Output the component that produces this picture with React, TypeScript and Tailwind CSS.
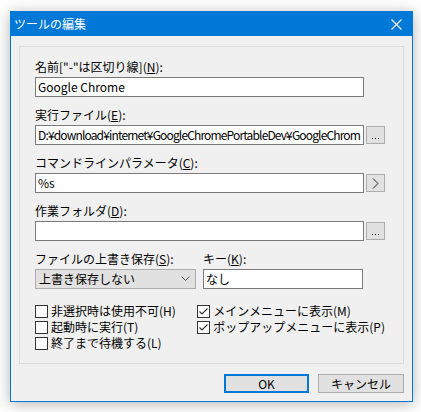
import React from 'react';

const font = { fontFamily: '"Noto Sans CJK JP", "Noto Sans", sans-serif' };

const Dots = () => (
  <div className="flex gap-[2px] mt-[7px]">
    <div className="w-[1px] h-[1px] bg-black" />
    <div className="w-[1px] h-[1px] bg-black" />
    <div className="w-[1px] h-[1px] bg-black" />
  </div>
);

const Field: React.FC<{ label: React.ReactNode; value?: string; button?: 'dots' | 'arrow'; first?: boolean; tight?: boolean }> = ({ label, value = '', button, first, tight }) => (
  <div className={first ? '' : 'mt-[10px]'}>
    <div className="h-[16px] leading-[16px] text-[12px] text-black">{label}</div>
    <div className="mt-[2px] flex">
      <div
        className={
          'w-[329px] h-[20px] border border-[#7a7a7a] bg-white px-[2px] text-[12px] leading-[18px] text-black whitespace-nowrap overflow-hidden' +
          (tight ? ' tracking-[-0.85px]' : '')
        }
      >
        {value}
      </div>
      {button && (
        <div className="ml-[2px] mt-[1px] w-[19px] h-[18px] bg-[#e1e1e1] border border-[#adadad] flex items-center justify-center">
          {button === 'dots' ? (
            <Dots />
          ) : (
            <svg width="7" height="11" viewBox="0 0 7 11">
              <path d="M1 0.5 L6 5.5 L1 10.5" fill="none" stroke="#222" strokeWidth="1" />
            </svg>
          )}
        </div>
      )}
    </div>
  </div>
);

const Check: React.FC<{ label: string; checked?: boolean }> = ({ label, checked }) => (
  <div className="h-[16px] flex items-center">
    <div className="w-[13px] h-[13px] border border-[#333] bg-white flex items-center justify-center shrink-0">
      {checked && (
        <svg width="11" height="11" viewBox="0 0 11 11">
          <path d="M1.5 5.5 L4 8 L9.5 2.5" fill="none" stroke="#333" strokeWidth="1.1" />
        </svg>
      )}
    </div>
    <span className="ml-[3px] text-[12px] leading-[16px] text-black whitespace-nowrap">{label}</span>
  </div>
);

export default function App() {
  return (
    <div className="w-[421px] h-[412px] bg-white pt-[11px] pl-[10px] overflow-hidden" style={font}>
      <div className="w-[403px] h-[391px] border border-[#0078d7] bg-[#f0f0f0] flex flex-col shadow-[0_2px_14px_rgba(0,0,0,0.3)]">
        {/* title bar */}
        <div className="h-[24px] bg-[#0078d7] flex items-center justify-between pl-[3px] pr-[10px] shrink-0">
          <span className="text-white text-[12px] leading-none">ツールの編集</span>
          <svg width="11" height="11" viewBox="0 0 11 11">
            <path d="M0.5 0.5 L10.5 10.5 M10.5 0.5 L0.5 10.5" stroke="#fff" strokeWidth="1.1" />
          </svg>
        </div>

        <div className="px-[8px] pt-[10px] flex flex-col">
          <div className="border border-[#dcdcdc] pt-[12px] pl-[15px] pr-[18px] pb-[12px]">
            <Field
              first
              label={<>名前["-"は区切り線](<span className="underline">N</span>):</>}
              value="Google Chrome"
            />
            <Field
              label={<>実行ファイル(<span className="underline">E</span>):</>}
              value="D:¥download¥internet¥GoogleChromePortableDev¥GoogleChrom"
              button="dots"
              tight
            />
            <Field
              label={<>コマンドラインパラメータ(<span className="underline">C</span>):</>}
              value="%s"
              button="arrow"
            />
            <Field
              label={<>作業フォルダ(<span className="underline">D</span>):</>}
              button="dots"
            />

            <div className="mt-[10px] flex">
              <div className="w-[168px]">
                <div className="h-[16px] leading-[16px] text-[12px] text-black">
                  ファイルの上書き保存(<span className="underline">S</span>):
                </div>
                <div className="mt-[2px] w-[161px] h-[20px] border border-[#adadad] bg-[#e1e1e1] flex items-center justify-between pl-[3px] pr-[5px]">
                  <span className="text-[12px] leading-none text-black">上書き保存しない</span>
                  <svg width="9" height="6" viewBox="0 0 9 6">
                    <path d="M0.5 0.5 L4.5 4.5 L8.5 0.5" fill="none" stroke="#555" strokeWidth="1" />
                  </svg>
                </div>
              </div>
              <div>
                <div className="h-[16px] leading-[16px] text-[12px] text-black">
                  キー(<span className="underline">K</span>):
                </div>
                <div className="mt-[2px] w-[160px] h-[20px] border border-[#7a7a7a] bg-white px-[2px] text-[12px] leading-[18px] text-black">
                  なし
                </div>
              </div>
            </div>

            <div className="mt-[14px] flex">
              <div className="w-[168px]">
                <Check label="非選択時は使用不可(H)" />
                <Check label="起動時に実行(T)" />
                <Check label="終了まで待機する(L)" />
              </div>
              <div>
                <Check label="メインメニューに表示(M)" checked />
                <Check label="ポップアップメニューに表示(P)" checked />
              </div>
            </div>
          </div>

          <div className="mt-[10px] flex justify-end gap-[9px]">
            <div className="w-[85px] h-[19px] border-2 border-[#0078d7] bg-[#e1e1e1] flex items-center justify-center text-[12px] leading-none text-black">
              OK
            </div>
            <div className="w-[86px] h-[19px] border border-[#adadad] bg-[#e1e1e1] flex items-center justify-center text-[12px] leading-none text-black">
              キャンセル
            </div>
          </div>
        </div>
      </div>
    </div>
  );
}
